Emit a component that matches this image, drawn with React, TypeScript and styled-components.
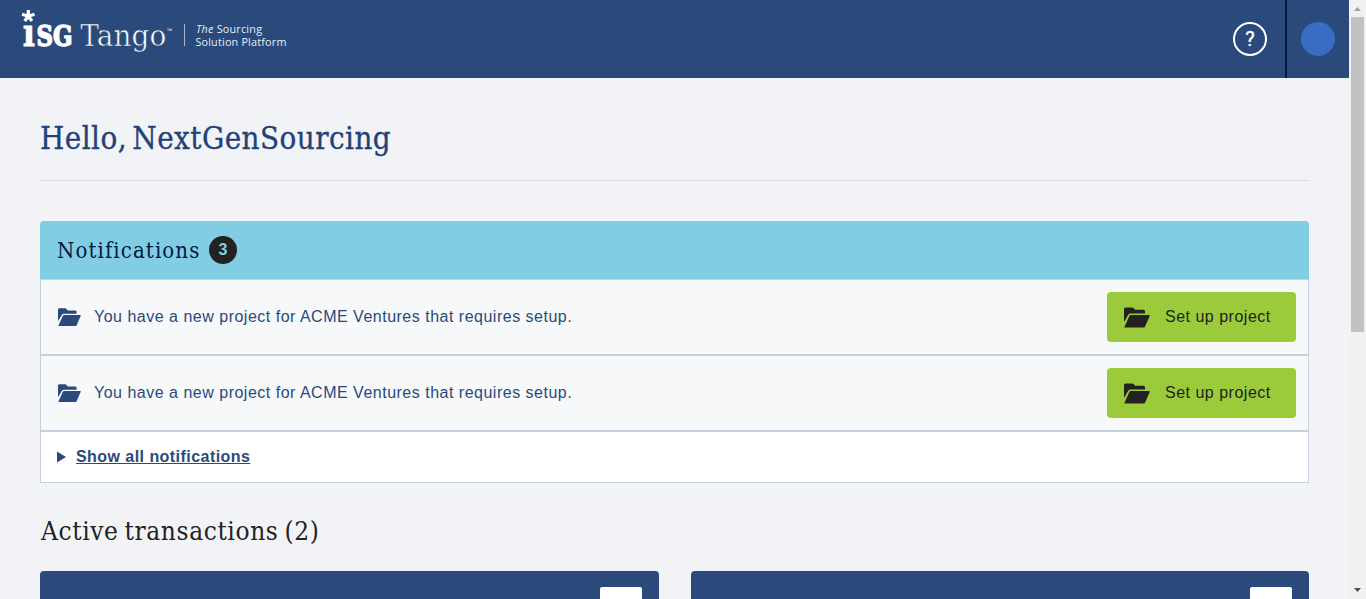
import React from 'react';
import styled, { createGlobalStyle } from 'styled-components';

const SLAB = "'Roboto Slab', 'DejaVu Serif Condensed', 'DejaVu Serif', serif";

const GlobalStyle = createGlobalStyle`
  *, *::before, *::after { box-sizing: border-box; }
  html, body { margin: 0; padding: 0; overflow: hidden; }
  body {
    font-family: 'Liberation Sans', Arial, sans-serif;
    font-size: 16px;
    color: #222;
    background: #f2f3f7;
  }
`;

const Window = styled.div`
  display: flex;
  width: 100vw;
  height: 100vh;
  overflow: hidden;
`;

const Page = styled.div`
  flex: 1;
  min-width: 0;
  height: 100%;
  overflow: hidden;
`;

const Header = styled.header`
  display: flex;
  height: 78px;
  background: #294a7b;
`;

const Logo = styled.svg`
  display: block;
  width: 300px;
  height: 78px;
  margin-right: auto;
`;

const HelpArea = styled.div`
  display: flex;
  align-items: center;
  padding-right: 18px;
`;

const HelpButton = styled.button`
  display: flex;
  align-items: center;
  justify-content: center;
  width: 34px;
  height: 34px;
  padding: 0;
  border: 2px solid #fff;
  border-radius: 50%;
  background: none;
  color: #fff;
  font: 400 20px/30px Roboto, sans-serif;
  -webkit-text-stroke: 0.3px #fff;
`;

const Account = styled.div`
  display: flex;
  align-items: center;
  width: 64px;
  padding-left: 14px;
  border-left: 2px solid #001843;
`;

const Avatar = styled.div`
  width: 34px;
  height: 34px;
  border-radius: 50%;
  background: #396dc3;
`;

const Main = styled.main`
  padding: 0 40px;
`;

const Greeting = styled.h1`
  height: 103px;
  margin: 0 0 40px;
  padding-top: 39px;
  border-bottom: 1px solid #dcdee3;
  font: 400 31px/42px ${SLAB};
  font-stretch: condensed;
  letter-spacing: 0.45px;
  word-spacing: -4px;
  -webkit-text-stroke: 0.3px #1f4278;
  color: #1f4278;
  white-space: nowrap;
`;

const Panel = styled.section`
  overflow: hidden;
  border-radius: 4px 4px 0 0;
`;

const PanelHeader = styled.div`
  display: flex;
  align-items: center;
  height: 58px;
  padding-left: 17px;
  background: #81cee4;
`;

const PanelTitle = styled.h2`
  width: 152px;
  margin: 0;
  padding-top: 1px;
  font: 400 22px/30px ${SLAB};
  font-stretch: condensed;
  letter-spacing: 1.1px;
  color: #001843;
  white-space: nowrap;
`;

const Count = styled.span`
  width: 28px;
  height: 28px;
  border-radius: 50%;
  background: #222;
  color: #81cee4;
  font-weight: 700;
  line-height: 28px;
  text-align: center;
`;

const Row = styled.div`
  display: flex;
  align-items: center;
  height: 76px;
  padding: 0 12px 0 17px;
  border: 1px solid #c8d0df;
  background: #f7f8fa;
  color: #294a7b;
`;

const Folder = styled.svg<{ $width: number }>`
  flex: none;
  width: ${(p) => p.$width}px;
  height: ${(p) => (p.$width * 21) / 26}px;
  fill: currentColor;
`;

const Message = styled.span`
  margin-left: 13px;
  margin-right: auto;
  letter-spacing: 0.5px;
  line-height: 24px;
`;

const SetupButton = styled.button`
  display: flex;
  align-items: center;
  gap: 15px;
  width: 189px;
  height: 50px;
  padding: 0 0 0 17px;
  border: 0;
  border-radius: 4px;
  background: #9bcb3b;
  color: #222;
  font: 400 16px/24px 'Liberation Sans', Arial, sans-serif;
  letter-spacing: 0.5px;
`;

const ShowAll = styled.div`
  display: flex;
  align-items: center;
  height: 52px;
  padding: 0 0 1px 16px;
  border: 1px solid #c8d0df;
  background: #fff;
`;

const Triangle = styled.svg`
  width: 9px;
  height: 12px;
  margin: 1px 10px 0 0;
`;

const ShowAllLink = styled.a`
  color: #294a7b;
  font-weight: 700;
  line-height: 24px;
  letter-spacing: 0.45px;
  text-decoration: underline;
`;

const SectionTitle = styled.h2`
  margin: 29px 0 20px;
  padding-left: 1px;
  font: 400 26px/39px ${SLAB};
  font-stretch: condensed;
  letter-spacing: 0.6px;
  word-spacing: -2px;
  white-space: nowrap;
`;

const Cards = styled.div`
  display: grid;
  grid-template-columns: 619px 618px;
  gap: 32px;
`;

const Card = styled.article`
  display: flex;
  justify-content: flex-end;
  height: 200px;
  padding: 16px 17px 0 0;
  border-radius: 4px;
  background: #294a7b;
`;

const CardAction = styled.div`
  width: 42px;
  height: 42px;
  border-radius: 2px;
  background: #fff;
`;

const Scrollbar = styled.div`
  display: flex;
  flex-direction: column;
  width: 17px;
  height: 100%;
  background: #f1f1f1;
`;

const ScrollArrow = styled.svg`
  display: block;
  width: 17px;
  height: 17px;
`;

const ScrollTrack = styled.div`
  flex: 1;
  padding: 0 2px;
`;

const ScrollThumb = styled.div`
  height: 315px;
  background: #c1c1c1;
`;

const notifications = [
  'You have a new project for ACME Ventures that requires setup.',
  'You have a new project for ACME Ventures that requires setup.',
];

function FolderIcon({ width }: { width: number }) {
  return (
    <Folder $width={width} viewBox="0 0 26 21">
      <path d="M0 15V2Q0 .4 1.5 .4H8.2Q9 .4 9.6 1L11 2.8H19.5Q21 2.8 21 4.3V6.4H6.7Q5 6.4 4.3 7.8Z" />
      <path d="M7 8H25.2Q26.1 8 25.7 8.9L21.1 19.4Q20.6 20.6 19.3 20.6H1Q.1 20.6 .5 19.7L5.2 9.2Q5.7 8 7 8Z" />
    </Folder>
  );
}

export default function App() {
  return (
    <Window>
      <GlobalStyle />
      <Page>
        <Header>
          <Logo viewBox="0 0 300 78" fill="#fff" aria-label="ISG Tango">
            <path d="M28.3 16.2V9.9M28.3 16.2L22.1 14.2M28.3 16.2L34.5 14.2M28.3 16.2L24.7 21M28.3 16.2L31.9 21" stroke="#fff" strokeWidth="3.3" />
            <text x="22.8" y="46.3" fontFamily="DejaVu Serif" fontWeight="700" fontSize="40" textLength="12.2" lengthAdjust="spacingAndGlyphs" stroke="#fff" strokeWidth="0.8">ı</text>
            <text x="36.5" y="46" fontFamily="DejaVu Serif" fontWeight="700" fontSize="28.6" textLength="36" lengthAdjust="spacingAndGlyphs" stroke="#fff" strokeWidth="1.5">SG</text>
            <text x="80.3" y="46" fontFamily="DejaVu Serif" fontSize="29" textLength="86" lengthAdjust="spacingAndGlyphs" stroke="#294a7b" strokeWidth="0.6">Tango</text>
            <text x="167" y="34" fontFamily="Open Sans" fontSize="7.5" textLength="5.5" lengthAdjust="spacingAndGlyphs" opacity="0.85">™</text>
            <rect x="184" y="24" width="1" height="22" opacity="0.6" />
            <text x="196" y="32.7" fontFamily="Open Sans" fontSize="10.8" textLength="66" fill="#e8edf5"><tspan fontStyle="italic">The</tspan> Sourcing</text>
            <text x="195.4" y="45.7" fontFamily="Open Sans" fontSize="10.8" textLength="91" fill="#e8edf5">Solution Platform</text>
          </Logo>
          <HelpArea><HelpButton>?</HelpButton></HelpArea>
          <Account><Avatar /></Account>
        </Header>
        <Main>
          <Greeting>Hello, NextGenSourcing</Greeting>
          <Panel>
            <PanelHeader>
              <PanelTitle>Notifications</PanelTitle>
              <Count>3</Count>
            </PanelHeader>
            {notifications.map((message, i) => (
              <Row key={i}>
                <FolderIcon width={23} />
                <Message>{message}</Message>
                <SetupButton><FolderIcon width={26} />Set up project</SetupButton>
              </Row>
            ))}
            <ShowAll>
              <Triangle viewBox="0 0 9 12"><path d="M0 0.5L9 6L0 11.5Z" fill="#294a7b" /></Triangle>
              <ShowAllLink>Show all notifications</ShowAllLink>
            </ShowAll>
          </Panel>
          <SectionTitle>Active transactions (2)</SectionTitle>
          <Cards>
            <Card><CardAction /></Card>
            <Card><CardAction /></Card>
          </Cards>
        </Main>
      </Page>
      <Scrollbar>
        <ScrollArrow viewBox="0 0 17 17"><path d="M5 11L8.5 7L12 11Z" fill="#a3a3a3" /></ScrollArrow>
        <ScrollTrack><ScrollThumb /></ScrollTrack>
        <ScrollArrow viewBox="0 0 17 17"><path d="M5 6L8.5 10L12 6Z" fill="#505050" /></ScrollArrow>
      </Scrollbar>
    </Window>
  );
}
